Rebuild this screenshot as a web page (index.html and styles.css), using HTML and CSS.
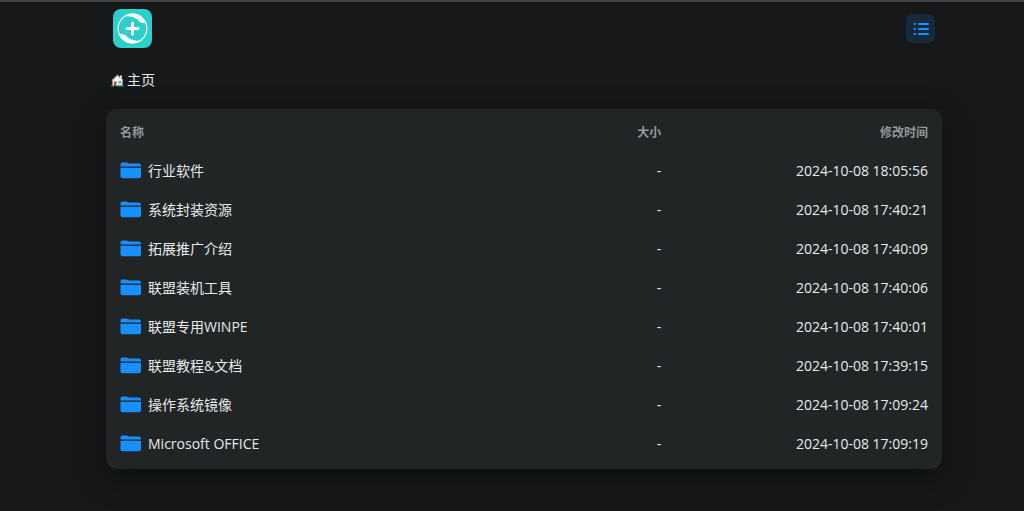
FILE: index.html
```html
<!DOCTYPE html>
<html lang="zh-CN">
<head>
<meta charset="utf-8">
<title>主页</title>
<link rel="stylesheet" href="styles.css">
</head>
<body>
<svg class="defs" aria-hidden="true">
  <symbol id="folder" viewBox="0 0 21 17">
    <path d="M.5 4.6V2.500Q.5.400 2.600.400H6.300Q7.300.400 7.900.900L8.900 1.600H18.900Q21 1.600 21 3.700V4.600Z"/>
    <path d="M.5 5.700H21V14.200Q21 16.300 18.900 16.300H2.600Q.5 16.300.5 14.200Z"/>
  </symbol>
</svg>
<div class="page">
  <header class="header">
    <a href="#" class="logo" aria-label="主页">
      <svg viewBox="0 0 39 39">
        <rect width="39" height="39" rx="8" fill="#2bcfcc"/>
        <circle cx="19.500" cy="19.500" r="14.400" fill="none" stroke="#fff" stroke-width="1.200"/>
        <path d="M10 8C17 1.800 29 3.800 32.500 13.500C30.500 14.200 28.500 14 27 13C23 8.500 17 6 10 8Z" fill="#fff"/>
        <path d="M29 31C22 37.200 10 35.200 6.500 25.500C8.500 24.800 10.500 25 12 26C16 30.500 22 33 29 31Z" fill="#fff"/>
        <path d="M19.500 14V25M14 19.500H25" stroke="#fff" stroke-width="3" stroke-linecap="round"/>
      </svg>
    </a>
    <button type="button" class="view" aria-label="列表视图">
      <svg viewBox="0 0 18 14">
        <path d="M2.500 2H3M2.500 7H3M2.500 12H3M7 2H16M7 7H16M7 12H16"/>
      </svg>
    </button>
  </header>
  <nav class="crumbs">
    <a href="#">
      <svg viewBox="0 0 13 14" aria-hidden="true">
        <path d="M9 2.500H11V7H9Z" fill="#d8dcda"/>
        <path d="M1.500 7.500 6.500 2.500 11.500 7.500V13H1.500Z" fill="#f2f4f2"/>
        <path d="M.8 7.500 6.500 2 12.200 7.500" fill="none" stroke="#e9b5aa" stroke-width="1"/>
        <path d="M3 8.500H5.500V13H3Z" fill="#c6402f"/>
        <path d="M7.500 8H10V10.500H7.500Z" fill="#48a9d8"/>
        <path d="M.5 12H3V13.500H.5ZM6 12H12.500V13.500H6Z" fill="#3fa65a"/>
      </svg>
      <span>主页</span>
    </a>
  </nav>
  <main class="card">
    <table class="files">
      <thead><tr><th class="name">名称</th><th class="size">大小</th><th class="time">修改时间</th></tr></thead>
      <tbody>
        <tr><td><a href="#"><svg><use href="#folder"/></svg>行业软件</a></td><td>-</td><td>2024-10-08 18:05:56</td></tr>
        <tr><td><a href="#"><svg><use href="#folder"/></svg>系统封装资源</a></td><td>-</td><td>2024-10-08 17:40:21</td></tr>
        <tr><td><a href="#"><svg><use href="#folder"/></svg>拓展推广介绍</a></td><td>-</td><td>2024-10-08 17:40:09</td></tr>
        <tr><td><a href="#"><svg><use href="#folder"/></svg>联盟装机工具</a></td><td>-</td><td>2024-10-08 17:40:06</td></tr>
        <tr><td><a href="#"><svg><use href="#folder"/></svg>联盟专用WINPE</a></td><td>-</td><td>2024-10-08 17:40:01</td></tr>
        <tr><td><a href="#"><svg><use href="#folder"/></svg>联盟教程&amp;文档</a></td><td>-</td><td>2024-10-08 17:39:15</td></tr>
        <tr><td><a href="#"><svg><use href="#folder"/></svg>操作系统镜像</a></td><td>-</td><td>2024-10-08 17:09:24</td></tr>
        <tr><td><a href="#"><svg><use href="#folder"/></svg>Microsoft OFFICE</a></td><td>-</td><td>2024-10-08 17:09:19</td></tr>
      </tbody>
    </table>
  </main>
</div>
</body>
</html>
```
FILE: styles.css
```css
* { box-sizing: border-box; }
body {
  min-height: 100vh;
  margin: 0;
  padding-left: 24px;
  border-top: 2px solid #444547;
  background: #17181a;
  color: #e8eaea;
  font: 14px/20px "Open Sans", "Noto Sans CJK SC", sans-serif;
}
a { color: inherit; text-decoration: none; }
.defs { display: none; }
.page { max-width: 836px; margin: 0 auto; padding-bottom: 40px; }
.header {
  display: flex;
  align-items: center;
  justify-content: space-between;
  padding: 7px 7px 0;
}
.logo, .logo svg { display: block; width: 39px; height: 39px; }
.view {
  display: grid;
  place-items: center;
  width: 29px;
  height: 29px;
  padding: 0;
  border: 0;
  border-radius: 7px;
  background: #172a3c;
}
.view svg {
  width: 18px;
  height: 14px;
  fill: none;
  stroke: #1890ff;
  stroke-width: 2;
  stroke-linecap: round;
}
.crumbs { display: flex; padding: 22px 5px 19px; }
.crumbs a { display: flex; align-items: center; gap: 3px; }
.crumbs svg { width: 13px; height: 14px; }
.card {
  padding: 6px 14px;
  border-radius: 11px;
  background: #212526;
  box-shadow: 0 9px 30px rgba(0, 0, 0, .4);
}
.files { width: 100%; table-layout: fixed; border-collapse: collapse; }
th, td { padding: 0; text-align: right; }
th { height: 36px; color: #94999b; font-size: 12px; font-weight: 700; }
td { height: 39px; }
.name { width: 50%; }
.size { width: 17%; }
.time { width: 33%; }
th:first-child, td:first-child { text-align: left; }
td a { display: flex; align-items: center; gap: 7px; }
td svg { width: 21px; height: 17px; fill: #1890ff; }
```
